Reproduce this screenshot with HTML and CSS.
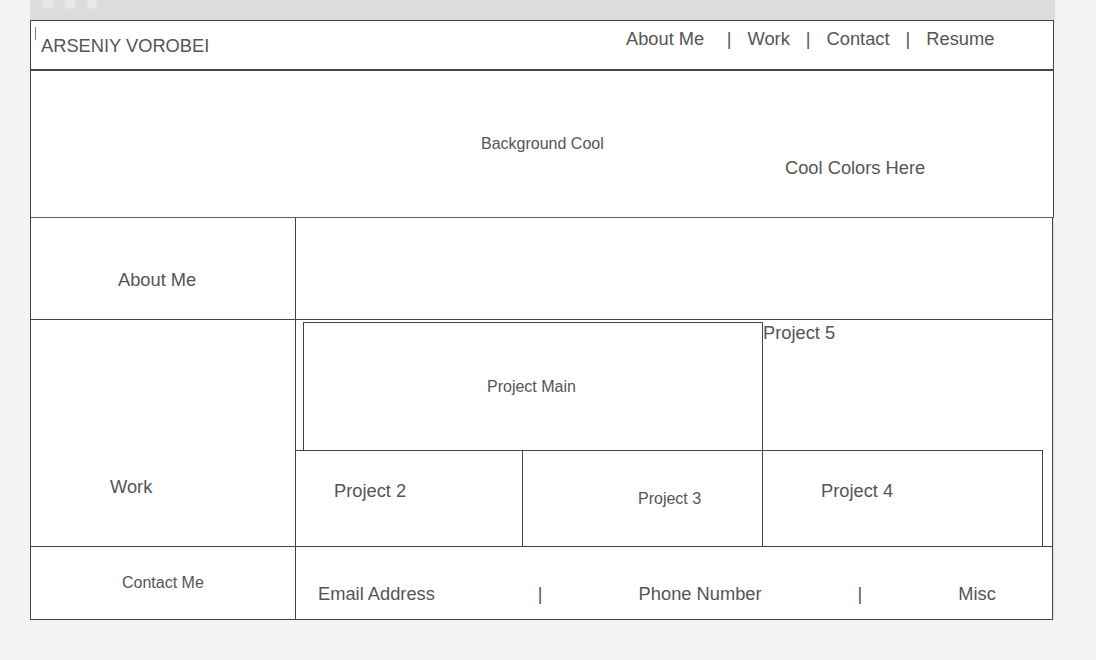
FILE: index.html
```html
<!DOCTYPE html>
<html lang="en">
<head>
    <meta charset="UTF-8">
    <meta name="viewport" content="width=device-width, initial-scale=1.0">
    <title>Arseniy Vorobei</title>
    <link rel="stylesheet" href="styles.css">
</head>
<body>
    <div class="window">
        <div class="titlebar">
            <span class="dot"></span>
            <span class="dot"></span>
            <span class="dot"></span>
        </div>

        <header class="masthead">
            <div class="brand">
                <span class="caret"></span>
                <span class="brand-name">ARSENIY VOROBEI</span>
            </div>
            <nav class="nav">
                <a class="first">About Me</a>
                <span>|</span>
                <a>Work</a>
                <span>|</span>
                <a>Contact</a>
                <span>|</span>
                <a>Resume</a>
            </nav>
        </header>

        <section class="hero">
            <p class="hero-title">Background Cool</p>
            <p class="hero-sub">Cool Colors Here</p>
        </section>

        <section class="board">
            <div class="label about-label">About Me</div>
            <div class="panel"></div>

            <div class="label work-label">Work</div>
            <div class="panel work-panel">
                <div class="work-top">
                    <div class="project-main">Project Main</div>
                    <div class="project-five">Project 5</div>
                </div>
                <div class="work-row">
                    <div class="project p2">Project 2</div>
                    <div class="project p3">Project 3</div>
                    <div class="project p4">Project 4</div>
                </div>
            </div>

            <div class="label contact-label">Contact Me</div>
            <div class="panel contact-panel">
                <span class="email">Email Address</span>
                <span class="sep-1">|</span>
                <span class="phone">Phone Number</span>
                <span class="sep-2">|</span>
                <span class="misc">Misc</span>
            </div>
        </section>
    </div>
</body>
</html>
```

FILE: styles.css
```css
* {
    box-sizing: border-box;
}
body {
    margin: 0;
    background-color: #f3f3f3;
    font-family: "Liberation Sans", Arial, Helvetica, sans-serif;
    color: #555;
}
p {
    margin: 0;
}
.window {
    width: 1025px;
    margin-left: 30px;
}
.titlebar {
    height: 20px;
    background-color: #dcdcdc;
    display: flex;
    align-items: flex-start;
    gap: 10px;
    padding-left: 12px;
    overflow: hidden;
}
.dot {
    width: 12px;
    height: 12px;
    margin-top: -3px;
    border-radius: 50%;
    background-color: #e8e8e8;
}
.masthead {
    width: 1024px;
    height: 51px;
    background-color: #fff;
    border: 1px solid #444;
    border-bottom-width: 2px;
    display: grid;
    grid-template-columns: 595px 1fr;
}
.brand {
    display: flex;
    align-items: flex-start;
}
.caret {
    width: 1px;
    height: 13px;
    margin: 6px 0 0 4px;
    background-color: #7a7a7a;
}
.brand-name {
    font-size: 18.3px;
    line-height: 20px;
    margin: 15px 0 0 5px;
}
.nav {
    display: flex;
    gap: 16px;
    padding-top: 8px;
    font-size: 18.3px;
    line-height: 20px;
}
.nav .first {
    margin-right: 6.5px;
}
.hero {
    width: 1024px;
    height: 147px;
    background-color: #fff;
    border: 1px solid #444;
    border-top: none;
    padding-top: 64px;
}
.hero-title {
    margin-left: 450px;
    font-size: 16px;
    line-height: 18px;
}
.hero-sub {
    margin: 5px 0 0 754px;
    font-size: 18.3px;
    line-height: 20px;
}
.board {
    width: 1023px;
    background-color: #fff;
    border-left: 1px solid #444;
    border-right: 1px solid #444;
    box-shadow: 1px 0 1px #e2e2e2;
    display: grid;
    grid-template-columns: 265px 1fr;
    grid-template-rows: 102px 227px 73px;
    font-size: 18.3px;
    line-height: 20px;
}
.label {
    border-right: 1px solid #444;
    border-bottom: 1px solid #444;
}
.panel {
    border-bottom: 1px solid #444;
}
.about-label {
    padding: 52px 0 0 87px;
}
.work-label {
    padding: 157px 0 0 79px;
}
.contact-label {
    padding: 27px 0 0 91px;
    font-size: 16px;
    line-height: 18px;
}
.work-panel {
    display: flex;
    flex-direction: column;
}
.work-top {
    height: 130px;
    display: flex;
    align-items: flex-start;
}
.project-main {
    width: 460px;
    height: 128px;
    margin: 2px 0 0 7px;
    padding: 55px 0 0 183px;
    border: 1px solid #444;
    border-bottom: none;
    font-size: 16px;
    line-height: 18px;
}
.project-five {
    margin-top: 3px;
}
.work-row {
    width: 747px;
    height: 96px;
    display: flex;
    border-top: 1px solid #444;
}
.project {
    border-right: 1px solid #444;
}
.p2 {
    width: 227px;
    padding: 30px 0 0 38px;
}
.p3 {
    width: 240px;
    padding: 39px 0 0 115px;
    font-size: 16px;
    line-height: 18px;
}
.p4 {
    width: 280px;
    padding: 30px 0 0 58px;
}
.contact-panel {
    display: flex;
    align-items: flex-start;
    padding-top: 37px;
}
.email {
    margin-left: 22px;
}
.sep-1 {
    margin-left: 103px;
}
.phone {
    margin-left: 96px;
}
.sep-2 {
    margin-left: 96px;
}
.misc {
    margin-left: 96px;
}
```
